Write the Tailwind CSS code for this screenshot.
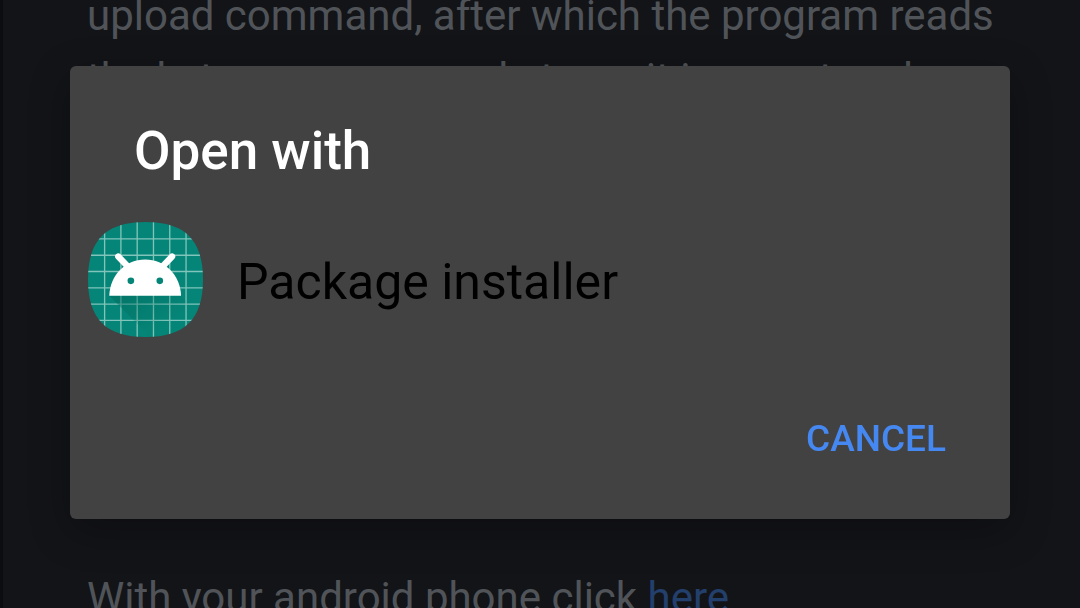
<!DOCTYPE html>
<html lang="en">
<head>
<meta charset="utf-8">
<meta name="viewport" content="width=device-width, initial-scale=1">
<title>Open with</title>
<script src="https://cdn.jsdelivr.net/npm/@tailwindcss/browser@4"></script>
</head>
<body class="h-screen overflow-hidden bg-[#131418] font-[Roboto,sans-serif]">
<div class="relative h-full overflow-hidden border-l-3 border-[#0c0d11]">
  <!-- Page behind the dialog -->
  <main class="-mt-4 pl-21 text-[42px] leading-[63px] whitespace-nowrap text-[#505458]">
    <p class="h-[582px]">upload command, after which the program reads<br>the bytes on a row and stores it is smart and</p>
    <p>With your android phone click <a href="#" class="text-[#233f6b]">here</a></p>
  </main>
</div>

<!-- Chooser dialog -->
<div class="fixed inset-0 flex items-start px-[70px] pt-[66px]">
  <section role="dialog" aria-labelledby="dialog-title" class="w-full rounded-md bg-[#424242] pb-11 shadow-[0_12px_40px_rgba(0,0,0,0.3)]">
    <h1 id="dialog-title" class="px-16 pt-[55px] text-[53px] leading-[60px] font-medium text-white">Open with</h1>
    <button type="button" class="mt-[41px] flex w-full items-center gap-[34px] pl-[18px] text-left text-[50px] leading-[60px] text-black">
      <svg class="size-[115px] shrink-0" viewBox="38 36 346 346" aria-hidden="true">
        <defs>
          <clipPath id="tile"><path d="M211 36C330 36 384 91 384 209S330 382 211 382S38 328 38 209S92 36 211 36Z"/></clipPath>
          <linearGradient id="shade" x1="150" y1="250" x2="240" y2="370" gradientUnits="userSpaceOnUse"><stop offset="0" stop-color="#00695c" stop-opacity=".5"/><stop offset="1" stop-color="#00695c" stop-opacity="0"/></linearGradient>
        </defs>
        <g clip-path="url(#tile)">
          <path fill="#058577" d="M38 36h346v346H38z"/>
          <path stroke="#80c4bb" stroke-width="4" d="M88 36v346M137 36v346M186 36v346M235 36v346M284 36v346M333 36v346M38 87h346M38 136h346M38 185h346M38 234h346M38 283h346M38 332h346"/>
          <path fill="url(#shade)" d="M102 258h216l66 66v58H226z"/>
        </g>
        <path stroke="#fff" stroke-width="19" stroke-linecap="round" d="M129 140l31 32M291 140l-31 32"/>
        <path fill="#fff" d="M102 258C104 197 150 149 210 149S316 197 318 258Z"/>
        <circle cx="167" cy="213" r="10" fill="#058577"/><circle cx="254" cy="213" r="10" fill="#058577"/>
      </svg>
      <span class="pt-1">Package installer</span>
    </button>
    <div class="mt-[66px] flex justify-end pr-12">
      <button type="button" class="px-4 py-3 text-[37px] leading-[48px] font-medium text-[#4688f1]">CANCEL</button>
    </div>
  </section>
</div>
</body>
</html>
